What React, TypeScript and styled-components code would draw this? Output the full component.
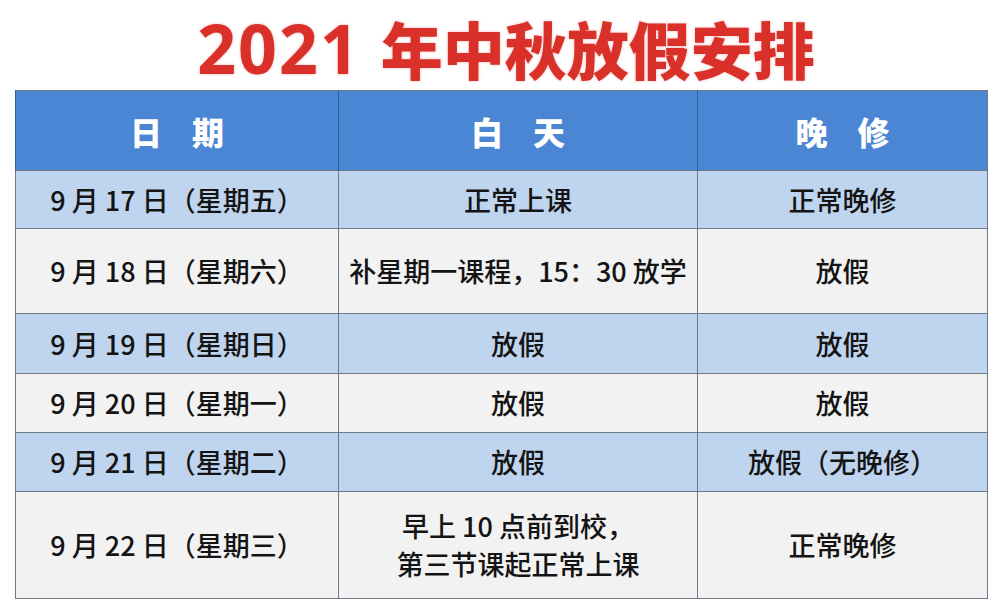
import React from 'react'
import styled, { createGlobalStyle } from 'styled-components'

const GlobalStyle = createGlobalStyle`
  html, body {
    margin: 0;
    padding: 0;
    background: #ffffff;
  }
  body {
    font-family: "Noto Sans CJK SC", "Noto Sans", sans-serif;
  }
`

const Page = styled.div`
  width: 1000px;
  height: 613px;
  background: #ffffff;
  overflow: hidden;
`

const Title = styled.h1`
  margin: 0;
  height: 90px;
  display: flex;
  align-items: center;
  justify-content: center;
  color: #d9302a;
  font-family: "Noto Sans CJK SC", sans-serif;
  font-weight: 900;
  text-shadow: 0 0 3px rgba(217, 48, 42, 0.35);
  line-height: 1;
  padding: 6px 0 0 12px;
  box-sizing: border-box;
`

const Year = styled.span`
  font-family: "Noto Sans", "Noto Sans CJK SC", sans-serif;
  font-size: 68px;
  font-weight: 700;
  margin-right: 20px;
  letter-spacing: 2px;
`

const TitleWords = styled.span`
  font-size: 62px;
`

const Table = styled.table`
  margin-left: 15px;
  width: 972px;
  border-collapse: collapse;
  table-layout: fixed;
  border: 1.5px solid #6f7a88;
`

const HeadCell = styled.th<{ $w: number }>`
  width: ${p => p.$w}px;
  height: 80px;
  padding: 0 0 0 30px;
  background: #4a86d3;
  color: #ffffff;
  font-family: "Noto Sans CJK SC", sans-serif;
  font-weight: 900;
  font-size: 32px;
  letter-spacing: 30px;
  text-align: center;
  border-left: 1.5px solid #2f5f9e;
  box-sizing: border-box;
`

const Row = styled.tr<{ $tone: 'blue' | 'grey'; $h: number }>`
  height: ${p => p.$h}px;
  background: ${p => (p.$tone === 'blue' ? '#bfd4ee' : '#f2f2f2')};
`

const Cell = styled.td`
  padding: 0;
  text-align: center;
  vertical-align: middle;
  font-family: "Noto Sans CJK SC", sans-serif;
  font-weight: 500;
  font-size: 27px;
  color: #141414;
  line-height: 38px;
  border: 1.5px solid #6f7a88;
  white-space: nowrap;
`

const Line = styled.div`
  display: block;
`

type Item = {
  date: string
  day: string[]
  night: string
  h: number
}

const rows: Item[] = [
  { date: '9 月 17 日（星期五）', day: ['正常上课'], night: '正常晚修', h: 58 },
  { date: '9 月 18 日（星期六）', day: ['补星期一课程，15：30 放学'], night: '放假', h: 85 },
  { date: '9 月 19 日（星期日）', day: ['放假'], night: '放假', h: 60 },
  { date: '9 月 20 日（星期一）', day: ['放假'], night: '放假', h: 59 },
  { date: '9 月 21 日（星期二）', day: ['放假'], night: '放假（无晚修）', h: 59 },
  { date: '9 月 22 日（星期三）', day: ['早上 10 点前到校，', '第三节课起正常上课'], night: '正常晚修', h: 107 },
]

export default function App() {
  return (
    <>
      <GlobalStyle />
      <Page>
        <Title>
          <Year>2021</Year>
          <TitleWords>年中秋放假安排</TitleWords>
        </Title>
        <Table>
          <thead>
            <tr>
              <HeadCell $w={323}>日期</HeadCell>
              <HeadCell $w={359}>白天</HeadCell>
              <HeadCell $w={290}>晚修</HeadCell>
            </tr>
          </thead>
          <tbody>
            {rows.map((r, i) => (
              <Row key={r.date} $tone={i % 2 === 0 ? 'blue' : 'grey'} $h={r.h}>
                <Cell>{r.date}</Cell>
                <Cell>
                  {r.day.map(t => (
                    <Line key={t}>{t}</Line>
                  ))}
                </Cell>
                <Cell>{r.night}</Cell>
              </Row>
            ))}
          </tbody>
        </Table>
      </Page>
    </>
  )
}
